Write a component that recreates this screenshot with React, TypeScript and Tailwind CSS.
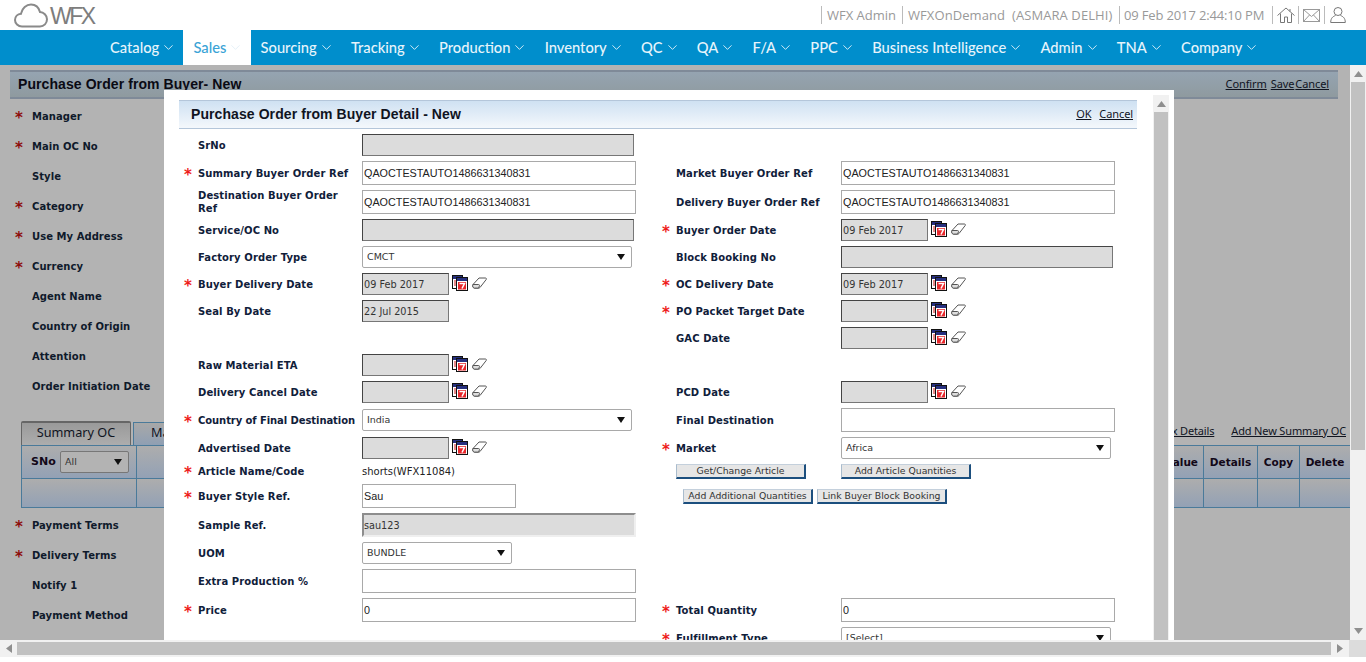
import React from 'react'
import { ChevronDown } from 'lucide-react'

const verdana = "font-['DejaVu_Sans',Verdana,sans-serif]"
const tahoma = "font-['Noto_Sans',sans-serif]"

const navItems = ['Catalog', 'Sales', 'Sourcing', 'Tracking', 'Production', 'Inventory', 'QC', 'QA', 'F/A', 'PPC', 'Business Intelligence', 'Admin', 'TNA', 'Company']

const CalendarIcon = () => (
  <svg width="16" height="16" viewBox="0 0 16 16" className="shrink-0">
    <rect x="0.5" y="0.5" width="10" height="13" fill="#fff" stroke="#111" />
    <rect x="1" y="1" width="9" height="3" fill="#27307f" />
    <path d="M2 6h2M2 8h2M2 10h2" stroke="#d01818" strokeWidth="1.2" />
    <rect x="4.500" y="2.500" width="11" height="13" fill="#fff" stroke="#111" />
    <rect x="5" y="3" width="10" height="3" fill="#27307f" />
    <rect x="6" y="7" width="8" height="7.500" fill="#e8262a" />
    <path d="M7.500 8.500h5L10 13.500" fill="none" stroke="#fff" strokeWidth="1.500" />
  </svg>
)

const EraserIcon = () => (
  <svg width="15" height="12" viewBox="0 0 15 12" className="shrink-0">
    <path d="M1 7.500 7 1h6.500c.8 0 1.200.8.700 1.500L8 10.500c-.4.400-.8.600-1.300.6H2.500C1 11.100.2 8.800 1 7.500Z" fill="#fff" stroke="#555" />
    <path d="M1 7.500h5.500c.8 0 1.200.6 1 1.300L6.500 11.100H2.500C1 11.100.2 8.800 1 7.500Z" fill="#dedede" stroke="#555" />
  </svg>
)

const TextBox = ({ value = '', w = 'w-[274px]' }: { value?: string; w?: string }) => (
  <input
    readOnly
    value={value}
    className={`${w} h-[24px] border border-[#a9a9a9] bg-white pl-[1px] font-['Liberation_Sans',Arial,sans-serif] text-[10.800px] text-[#222] outline-none`}
  />
)

const GreyBox = ({ value = '', w = 'w-[272px]' }: { value?: string; w?: string }) => (
  <input
    readOnly
    value={value}
    className={`${w} h-[22px] border border-t-[#444] border-l-[#444] border-r-[#777] border-b-[#777] bg-[#dcdcdc] pt-[1px] pl-[1px] ${verdana} text-[9.700px] text-[#333] outline-none`}
  />
)

const DateBox = ({ value = '' }: { value?: string }) => (
  <div className="flex items-center gap-[2px]">
    <GreyBox value={value} w="w-[87px]" />
    <div className="-mt-[2px] ml-[1px] flex items-center gap-[4px]">
      <CalendarIcon />
      <EraserIcon />
    </div>
  </div>
)

const SelectBox = ({ value, w = 'w-[270px]', dim = false }: { value: string; w?: string; dim?: boolean }) => (
  <div className={`${w} flex h-[22px] items-center justify-between rounded-[2px] border ${dim ? 'border-[#777] bg-[#b3b3b3]' : 'border-[#a9a9a9] bg-white'} pl-[4px] pr-[6px] ${verdana} text-[9.500px] text-[#333]`}>
    <span className="pt-[1px]">{value}</span>
    <svg width="8" height="6" viewBox="0 0 8 6"><path d="M0 0h8L4 6Z" fill="#111" /></svg>
  </div>
)

const ActionButton = ({ label, w = 'w-[130px]' }: { label: string; w?: string }) => (
  <div className={`${w} flex h-[15px] items-center justify-center border border-t-[#c4d0dc] border-l-[#a9bccd] border-r-2 border-b-2 border-r-[#1c4f7e] border-b-[#1c4f7e] bg-[#e6e6e6] ${verdana} text-[9.300px] text-[#333]`}>
    {label}
  </div>
)

const Label = ({ text, req = false, w, tight = false }: { text?: string; req?: boolean; w: string; tight?: boolean }) => (
  <>
    <span className="w-[14px] shrink-0 translate-y-[2px] font-['DejaVu_Sans',sans-serif] text-[15px] leading-none font-bold text-[#ee1c1c]">{req ? '*' : ''}</span>
    <span className={`${w} shrink-0 whitespace-pre-line ${verdana} text-[10px] leading-[13px] font-bold ${tight ? 'tracking-[-0.08px]' : 'tracking-[0.1px]'} text-[#10203a]`}>{text}</span>
  </>
)

type Side = { label?: string; req?: boolean; tight?: boolean; field?: React.ReactNode }
type FormRow = { h: string; left: Side; right?: Side; rightCustom?: React.ReactNode }

const formRows: FormRow[] = [
  { h: 'h-[27px]', left: { label: 'SrNo', field: <GreyBox /> } },
  {
    h: 'h-[28px]',
    left: { label: 'Summary Buyer Order Ref', req: true, field: <TextBox value="QAOCTESTAUTO1486631340831" /> },
    right: { label: 'Market Buyer Order Ref', field: <TextBox value="QAOCTESTAUTO1486631340831" /> },
  },
  {
    h: 'h-[30px]',
    left: { label: 'Destination Buyer Order\nRef', field: <TextBox value="QAOCTESTAUTO1486631340831" /> },
    right: { label: 'Delivery Buyer Order Ref', field: <TextBox value="QAOCTESTAUTO1486631340831" /> },
  },
  {
    h: 'h-[27px]',
    left: { label: 'Service/OC No', field: <GreyBox /> },
    right: { label: 'Buyer Order Date', req: true, field: <DateBox value="09 Feb 2017" /> },
  },
  {
    h: 'h-[27px]',
    left: { label: 'Factory Order Type', field: <SelectBox value="CMCT" /> },
    right: { label: 'Block Booking No', field: <GreyBox /> },
  },
  {
    h: 'h-[27px]',
    left: { label: 'Buyer Delivery Date', req: true, field: <DateBox value="09 Feb 2017" /> },
    right: { label: 'OC Delivery Date', req: true, field: <DateBox value="09 Feb 2017" /> },
  },
  {
    h: 'h-[27px]',
    left: { label: 'Seal By Date', field: <GreyBox value="22 Jul 2015" w="w-[87px]" /> },
    right: { label: 'PO Packet Target Date', req: true, field: <DateBox /> },
  },
  { h: 'h-[27px]', left: {}, right: { label: 'GAC Date', field: <DateBox /> } },
  { h: 'h-[27px]', left: { label: 'Raw Material ETA', field: <DateBox /> } },
  {
    h: 'h-[27px]',
    left: { label: 'Delivery Cancel Date', field: <DateBox /> },
    right: { label: 'PCD Date', field: <DateBox /> },
  },
  {
    h: 'h-[28px]',
    left: { label: 'Country of Final Destination', req: true, tight: true, field: <SelectBox value="India" /> },
    right: { label: 'Final Destination', field: <TextBox /> },
  },
  {
    h: 'h-[28px]',
    left: { label: 'Advertised Date', field: <DateBox /> },
    right: { label: 'Market', req: true, field: <SelectBox value="Africa" /> },
  },
  {
    h: 'h-[19px]',
    left: {
      label: 'Article Name/Code',
      req: true,
      field: <span className={`${verdana} text-[10px] text-[#222]`}>shorts(WFX11084)</span>,
    },
    rightCustom: (
      <div className="flex gap-[35px] pl-[14px]">
        <ActionButton label="Get/Change Article" />
        <ActionButton label="Add Article Quantities" />
      </div>
    ),
  },
  {
    h: 'h-[30px]',
    left: { label: 'Buyer Style Ref.', req: true, field: <TextBox value="Sau" w="w-[154px]" /> },
    rightCustom: (
      <div className="flex gap-[4px] pl-[21px]">
        <ActionButton label="Add Additional Quantities" />
        <ActionButton label="Link Buyer Block Booking" />
      </div>
    ),
  },
  {
    h: 'h-[28px]',
    left: {
      label: 'Sample Ref.',
      field: (
        <input
          readOnly
          value="sau123"
          className={`h-[24px] w-[274px] border-2 border-t-[#8d8d8d] border-l-[#8d8d8d] border-r-[#efefef] border-b-[#efefef] bg-[#dcdcdc] ${verdana} text-[9.700px] text-[#333] outline-none`}
        />
      ),
    },
  },
  { h: 'h-[28px]', left: { label: 'UOM', field: <SelectBox value="BUNDLE" w="w-[150px]" /> } },
  { h: 'h-[28px]', left: { label: 'Extra Production %', field: <TextBox /> } },
  {
    h: 'h-[30px]',
    left: { label: 'Price', req: true, field: <TextBox value="0" /> },
    right: { label: 'Total Quantity', req: true, field: <TextBox value="0" /> },
  },
  {
    h: 'h-[26px]',
    left: {},
    right: { label: 'Fulfillment Type', req: true, field: <SelectBox value="[Select]" /> },
  },
]

const backLabelsTop = [
  { text: 'Manager', req: true },
  { text: 'Main OC No', req: true },
  { text: 'Style' },
  { text: 'Category', req: true },
  { text: 'Use My Address', req: true },
  { text: 'Currency', req: true },
  { text: 'Agent Name' },
  { text: 'Country of Origin' },
  { text: 'Attention' },
  { text: 'Order Initiation Date' },
]

const backLabelsBottom = [
  { text: 'Payment Terms', req: true },
  { text: 'Delivery Terms', req: true },
  { text: 'Notify 1' },
  { text: 'Payment Method' },
]

const BackLabel = ({ text, req }: { text: string; req?: boolean }) => (
  <div className="flex h-[30px] items-center pl-[15px]">
    <span className="w-[17px] shrink-0 translate-y-[2px] font-['DejaVu_Sans',sans-serif] text-[15px] leading-none font-bold text-[#8e0d0d]">{req ? '*' : ''}</span>
    <span className={`${verdana} text-[10px] font-bold tracking-[0.05px] text-[#0f1a2b]`}>{text}</span>
  </div>
)

const ScrollArrow = ({ d }: { d: string }) => (
  <svg width="9" height="6" viewBox="0 0 9 6" className="shrink-0"><path d={d} fill="#8f8f8f" /></svg>
)

export default function App() {
  return (
    <div className="relative flex h-[662px] w-[1366px] flex-col overflow-hidden bg-white font-['Liberation_Sans',Arial,sans-serif]">
      {/* Top bar */}
      <div className="flex h-[30px] shrink-0 items-center justify-between pr-[20px] pl-[14px]">
        <div className="flex items-center">
          <svg width="34" height="25" viewBox="0 0 34 25" fill="none" stroke="#8a8a8a" strokeWidth="2">
            <path d="M8 23.500C4 23.500 1 20.500 1 17c0-3.500 2.600-6 6-6.300C8 5 12.500 1.500 17 1.500c4.500 0 7.800 3 9 7.500 3.700.2 7 3.500 7 7.300 0 4-3 7.200-7 7.200Z" />
          </svg>
          <span className="mt-[3px] ml-[2px] text-[23px] leading-none tracking-[-2.500px] text-[#7d7d7d]">WFX</span>
        </div>
        <div className="flex items-center font-['Open_Sans',sans-serif] text-[13px] whitespace-pre text-[#999]">
          <span className="w-[81px] border-l border-[#bbb] pl-[5px] leading-[18px]">WFX Admin</span>
          <span className="w-[217px] border-l border-[#bbb] pl-[5px] leading-[18px] tracking-[0.08px]">WFXOnDemand  (ASMARA DELHI)</span>
          <span className="w-[153px] border-l border-[#bbb] pl-[4px] leading-[18px] tracking-[-0.15px]">09 Feb 2017 2:44:10 PM</span>
          <span className="flex h-[18px] w-[26px] items-center border-l border-[#bbb] pl-[4px]">
            <svg width="18" height="16" viewBox="0 0 18 16" fill="none" stroke="#777">
              <path d="M.5 8.500 9 1l8.500 7.500M3.500 6.500v9h4V10h3v5.500h4v-9M13 2v2.500" />
            </svg>
          </span>
          <span className="flex h-[18px] w-[26px] items-center border-l border-[#bbb] pl-[4px]">
            <svg width="17" height="13" viewBox="0 0 17 13" fill="none" stroke="#999">
              <rect x=".5" y=".5" width="16" height="12" />
              <path d="m.5.500 8 7 8-7M.5 12.500l6-6.500M16.500 12.500l-6-6.500" />
            </svg>
          </span>
          <span className="flex h-[18px] items-center border-l border-[#bbb] pl-[5px]">
            <svg width="16" height="16" viewBox="0 0 16 16" fill="none" stroke="#777">
              <circle cx="8" cy="4.500" r="4" />
              <path d="M5.500 8.500C3 9.500.7 11 .7 15.500h14.600C15.300 11 13 9.500 10.500 8.500" />
            </svg>
          </span>
        </div>
      </div>

      {/* Main nav */}
      <div className="flex h-[35px] shrink-0 items-stretch bg-[#008ecc] pl-[100px] font-['Lato',sans-serif] text-[14.700px] font-medium">
        {navItems.map((item) => (
          <div
            key={item}
            className={`flex items-center gap-[2px] pr-[7.250px] pl-[10px] ${item === 'Sales' ? 'bg-white text-[#3aa3d6]' : 'text-[#e6f4fb]'}`}
          >
            <span>{item}</span>
            <ChevronDown size={15} strokeWidth={1.3} className={item === 'Sales' ? 'text-[#e0eef6]' : 'text-white'} />
          </div>
        ))}
      </div>

      {/* Dimmed page */}
      <div className="flex min-h-0 flex-1">
        <div className="w-[1350px] shrink-0 overflow-hidden bg-[#b3b3b3] pt-[5px]">
          <div className="mr-[12px] ml-[10px] flex h-[29px] items-center justify-between border-y-2 border-[#7f8a98] bg-gradient-to-b from-[#95a4b1] to-[#8f9a9f] pr-[9px] pl-[8px]">
            <span className="text-[14px] font-bold tracking-[0.08px] text-[#0a0a14]">Purchase Order from Buyer- New</span>
            <span className={`flex ${tahoma} text-[11px] tracking-[-0.1px] text-[#10141f] underline`}>
              <span className="mr-[4px]">Confirm</span>
              <span>Save</span>
              <span className="ml-[1px]">Cancel</span>
            </span>
          </div>
          <div className="mt-[2px]">
            {backLabelsTop.map((l) => (
              <BackLabel key={l.text} {...l} />
            ))}
          </div>
          <div className="mt-[20px] ml-[21px] flex h-[24px] items-end justify-between pr-[4px]">
            <div className="flex items-end gap-[2px]">
              <div className={`flex h-[24px] w-[110px] items-center justify-center rounded-t-[2px] border border-t-2 border-b-0 border-[#666] bg-gradient-to-b from-[#9a9a9a] to-[#adadad] pb-[3px] ${tahoma} text-[12.700px] text-[#10141f]`}>Summary OC</div>
              <div className={`flex h-[23px] w-[160px] items-center border border-b-0 border-[#4a7a9a] bg-gradient-to-b from-[#a8a8a8] to-[#8f9fb3] pb-[2px] pl-[17px] ${tahoma} text-[12.700px] text-[#10141f]`}>Main OC</div>
            </div>
            <div className={`flex gap-[17px] pb-[6px] ${tahoma} text-[11px] tracking-[-0.15px] text-[#10141f] underline`}>
              <span>Tax Details</span>
              <span>Add New Summary OC</span>
            </div>
          </div>
          <div className="ml-[21px] border-b border-l border-[#4a7a9a]">
            <div className="flex h-[33px] border-t border-[#4a7a9a] bg-gradient-to-b from-[#adadad] to-[#93a1b5] text-[#120818]">
              <div className="flex w-[115px] items-center justify-between border-r border-[#4a7a9a] pr-[7px] pl-[9px]">
                <span className={`${verdana} text-[11px] font-bold`}>SNo</span>
                <SelectBox value="All" w="w-[69px]" dim />
              </div>
              <div className={`flex flex-1 items-center justify-end border-r border-[#4a7a9a] pt-[1px] pr-[5px] ${verdana} text-[10.500px] font-bold`}>Value</div>
              <div className={`flex w-[54px] items-center justify-center border-r border-[#4a7a9a] pt-[1px] ${verdana} text-[10.500px] font-bold`}>Details</div>
              <div className={`flex w-[42px] items-center justify-center border-r border-[#4a7a9a] pt-[1px] ${verdana} text-[10.500px] font-bold`}>Copy</div>
              <div className={`flex w-[50px] items-center justify-center pt-[1px] ${verdana} text-[10.500px] font-bold`}>Delete</div>
            </div>
            <div className="flex h-[29px] border-t border-[#4a7a9a] bg-gradient-to-b from-[#adadad] to-[#93a1b5]">
              <div className="w-[115px] border-r border-[#4a7a9a]" />
              <div className="flex-1 border-r border-[#4a7a9a]" />
              <div className="w-[54px] border-r border-[#4a7a9a]" />
              <div className="w-[42px] border-r border-[#4a7a9a]" />
              <div className="w-[50px]" />
            </div>
          </div>
          <div className="mt-[2px]">
            {backLabelsBottom.map((l) => (
              <BackLabel key={l.text} {...l} />
            ))}
          </div>
        </div>
        {/* Page vertical scrollbar */}
        <div className="flex w-[16px] flex-col items-center bg-[#f1f1f1] py-[6px]">
          <ScrollArrow d="M4.500 0 9 6H0Z" />
          <div className="mt-[5px] h-[368px] w-[14px] bg-[#c1c1c1]" />
          <div className="flex-1" />
          <ScrollArrow d="M0 0h9L4.500 6Z" />
        </div>
      </div>

      {/* Page horizontal scrollbar */}
      <div className="flex h-[17px] shrink-0 items-center bg-[#f1f1f1]">
        <div className="flex w-[17px] justify-center">
          <svg width="6" height="9" viewBox="0 0 6 9"><path d="M6 0v9L0 4.500Z" fill="#8f8f8f" /></svg>
        </div>
        <div className="h-[13px] w-[1314px] bg-[#c1c1c1]" />
        <div className="flex w-[18px] justify-center">
          <svg width="6" height="9" viewBox="0 0 6 9"><path d="M0 0v9l6-4.500Z" fill="#8f8f8f" /></svg>
        </div>
        <div className="h-[17px] flex-1 bg-[#dcdcdc]" />
      </div>
      <div className="h-[5px] shrink-0 bg-white" />

      {/* Modal over the dimmed page */}
      <div className="absolute top-[90px] left-[164px] flex h-[550px] w-[1010px] overflow-hidden bg-white">
        <div className="w-[989px] shrink-0 overflow-hidden pt-[10px]">
          <div className="mr-[16px] ml-[15px] flex h-[29px] items-center justify-between border-y border-[#b4c6da] bg-gradient-to-b from-[#cfe1f2] to-[#f4f8fc] pr-[4px] pl-[12px]">
            <span className="text-[14px] font-bold tracking-[0.08px] text-[#10141f]">Purchase Order from Buyer Detail - New</span>
            <span className={`flex gap-[8px] ${tahoma} text-[11px] tracking-[-0.1px] text-[#10141f] underline`}>
              <span>OK</span>
              <span>Cancel</span>
            </span>
          </div>
          <div className="mt-[3px] pl-[20px]">
            {formRows.map((row, i) => (
              <div key={i} className={`flex ${row.h} items-center`}>
                <div className="flex w-[478px] shrink-0 items-center">
                  <Label text={row.left.label} req={row.left.req} tight={row.left.tight} w="w-[164px]" />
                  <div className={row.h === 'h-[27px]' ? '-mt-[1px] flex' : 'flex'}>{row.left.field}</div>
                </div>
                <div className="flex items-center">
                  {row.right && <Label text={row.right.label} req={row.right.req} w="w-[165px]" />}
                  {row.right && <div className={row.h === 'h-[27px]' ? '-mt-[1px] flex' : 'flex'}>{row.right.field}</div>}
                  {row.rightCustom}
                </div>
              </div>
            ))}
          </div>
        </div>
        {/* Modal scrollbar */}
        <div className="mt-[5px] flex w-[16px] flex-col items-center bg-[#f1f1f1] pt-[6px]">
          <ScrollArrow d="M4.500 0 9 6H0Z" />
          <div className="mt-[5px] w-[14px] flex-1 bg-[#c1c1c1]" />
        </div>
      </div>
    </div>
  )
}
